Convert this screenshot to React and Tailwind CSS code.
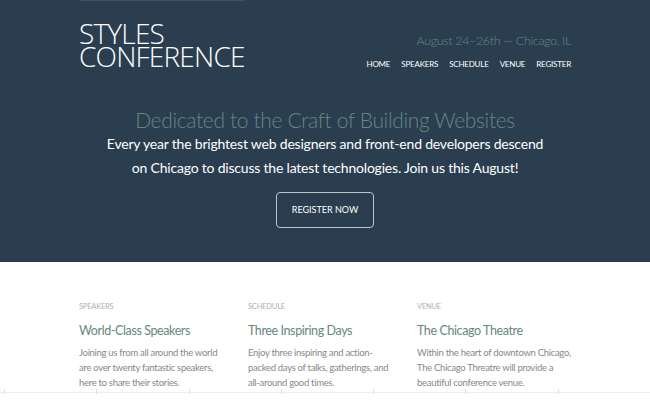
import React from "react";

const cols = [
  {
    label: "Speakers",
    title: "World-Class Speakers",
    text: "Joining us from all around the world are over twenty fantastic speakers, here to share their stories.",
    w: "w-[146px]",
  },
  {
    label: "Schedule",
    title: "Three Inspiring Days",
    text: "Enjoy three inspiring and action-packed days of talks, gatherings, and all-around good times.",
    w: "w-[150px]",
  },
  {
    label: "Venue",
    title: "The Chicago Theatre",
    text: "Within the heart of downtown Chicago, The Chicago Threatre will provide a beautiful conference venue.",
    w: "w-[156px]",
  },
];

const nav = ["Home", "Speakers", "Schedule", "Venue", "Register"];

export default function App() {
  return (
    <div className="w-[650px] h-[406px] overflow-hidden bg-white font-['Lato',sans-serif]">
      {/* header + hero */}
      <div className="bg-[#2a3e50] h-[262px] border-b border-[#24384a]">
        <div className="w-[492px] mx-auto">
          <div className="h-px w-[166px] bg-[#3c5163]" />
          <div className="flex justify-between pt-[21px]">
            <div className="text-white font-['Open_Sans',sans-serif] font-light text-[28px] leading-[23px] tracking-[-0.8px] uppercase">
              <div>Styles</div>
              <div>Conference</div>
            </div>
            <div className="flex flex-col items-end pt-[9px]">
              <div className="text-[#648880] font-light text-[12.5px] leading-[20px] tracking-[-0.35px]">
                August 24–26th — Chicago, IL
              </div>
              <nav className="flex gap-[11px] mt-[7px] text-white text-[8px] leading-[12px] tracking-[-0.2px] uppercase">
                {nav.map((n) => (
                  <span key={n}>{n}</span>
                ))}
              </nav>
            </div>
          </div>

          <div className="text-center mt-[37px]">
            <h1 className="text-[#648880] font-light text-[21px] leading-[26px] tracking-[-0.35px]">
              Dedicated to the Craft of Building Websites
            </h1>
            <p className="text-white text-[14px] leading-[24px] tracking-[-0.2px] -mt-[1px]">
              Every year the brightest web designers and front-end developers descend
              <br />
              on Chicago to discuss the latest technologies. Join us this August!
            </p>
            <button className="mt-[12px] w-[98px] h-[36px] border-[1.5px] border-[#b9c5ce] rounded-[4px] text-white text-[9px] uppercase">
              Register now
            </button>
          </div>
        </div>
      </div>

      {/* teasers */}
      <div className="w-[492px] mx-auto grid grid-cols-3 gap-[15px] pt-[40px]">
        {cols.map((c) => (
          <section key={c.label}>
            <h5 className="text-[#a9b2b9] text-[7.5px] leading-[10px] tracking-[-0.2px] uppercase">{c.label}</h5>
            <h3 className="text-[#648880] text-[12.5px] leading-[16px] tracking-[-0.4px] mt-[11px]">{c.title}</h3>
            <p className={`text-[#888] text-[9.5px] leading-[15px] tracking-[-0.3px] mt-[6px] ${c.w}`}>{c.text}</p>
          </section>
        ))}
      </div>

      {/* cropped gallery edge */}
      <div className="flex mt-[2px] border-t border-[#eceeef]">
        {[0, 1, 2, 3, 4, 5, 6].map((i) => (
          <div key={i} className="w-[98.5px] h-[5px] border-l border-[#dde1e3] first:ml-[4px] -mt-[4px]" />
        ))}
      </div>
    </div>
  );
}
